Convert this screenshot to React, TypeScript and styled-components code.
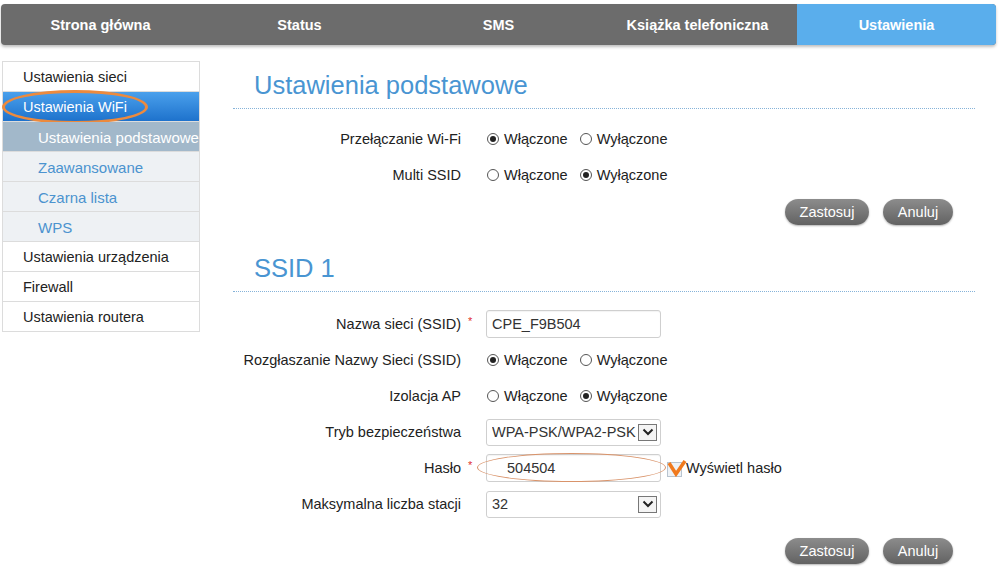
import styled, { createGlobalStyle } from 'styled-components'

const GlobalStyle = createGlobalStyle`
  body {
    margin: 0;
    background: #fff;
    font-family: "Liberation Sans", Arial, sans-serif;
    font-size: 14.5px;
    color: #222;
  }
`

const tabs = ['Strona główna', 'Status', 'SMS', 'Książka telefoniczna', 'Ustawienia']

const menu = [
  { label: 'Ustawienia sieci', level: 0 },
  { label: 'Ustawienia WiFi', level: 0, open: true },
  { label: 'Ustawienia podstawowe', level: 1, active: true },
  { label: 'Zaawansowane', level: 1 },
  { label: 'Czarna lista', level: 1 },
  { label: 'WPS', level: 1 },
  { label: 'Ustawienia urządzenia', level: 0 },
  { label: 'Firewall', level: 0 },
  { label: 'Ustawienia routera', level: 0 },
]

const Radio = ({ checked, label }: { checked: boolean; label: string }) => (
  <RadioItem>
    <RadioDot $checked={checked} />
    {label}
  </RadioItem>
)

const OnOff = ({ on }: { on: boolean }) => (
  <RadioGroup>
    <Radio checked={on} label="Włączone" />
    <Radio checked={!on} label="Wyłączone" />
  </RadioGroup>
)

const Arrow = () => (
  <ArrowBox>
    <svg width="12" height="8" viewBox="0 0 12 8">
      <path d="M1.5 1.5 L6 6 L10.5 1.5" fill="none" stroke="#222" strokeWidth="2" />
    </svg>
  </ArrowBox>
)

const Row = ({
  label,
  required,
  children,
}: {
  label: string
  required?: boolean
  children: React.ReactNode
}) => (
  <FormRow>
    <Label>{label}</Label>
    <Star>{required ? '*' : ''}</Star>
    <Control>{children}</Control>
  </FormRow>
)

const Buttons = ({ top }: { top: number }) => (
  <ButtonBar $top={top}>
    <Button $w={84}>Zastosuj</Button>
    <Button $w={70}>Anuluj</Button>
  </ButtonBar>
)

const App = () => {
  return (
    <Page>
      <GlobalStyle />
      <Nav>
        {tabs.map((t) => (
          <Tab key={t} $active={t === 'Ustawienia'}>
            {t}
          </Tab>
        ))}
      </Nav>
      <Body>
        <Sidebar>
          {menu.map((m) => (
            <MenuItem key={m.label} $level={m.level} $open={!!m.open} $active={!!m.active}>
              {m.label}
              {m.open && <SideMark />}
            </MenuItem>
          ))}
        </Sidebar>
        <Main>
          <Title>Ustawienia podstawowe</Title>
          <Rows $top={12}>
            <Row label="Przełączanie Wi-Fi">
              <OnOff on />
            </Row>
            <Row label="Multi SSID">
              <OnOff on={false} />
            </Row>
          </Rows>
          <Buttons top={6} />

          <Title $top={28}>SSID 1</Title>
          <Rows $top={14}>
            <Row label="Nazwa sieci (SSID)" required>
              <Input>CPE_F9B504</Input>
            </Row>
            <Row label="Rozgłaszanie Nazwy Sieci (SSID)">
              <OnOff on />
            </Row>
            <Row label="Izolacja AP">
              <OnOff on={false} />
            </Row>
            <Row label="Tryb bezpieczeństwa">
              <Select>
                <SelectText>WPA-PSK/WPA2-PSK</SelectText>
                <Arrow />
              </Select>
            </Row>
            <Row label="Hasło" required>
              <Input $indent={20}>
                504504
                <PassMark />
              </Input>
              <Check>
                <CheckBox>
                  <svg width="20" height="18" viewBox="0 0 20 18">
                    <path d="M2 4 L9 15 L18 2" fill="none" stroke="#f07a1e" strokeWidth="3.5" strokeLinejoin="miter" />
                  </svg>
                </CheckBox>
                Wyświetl hasło
              </Check>
            </Row>
            <Row label="Maksymalna liczba stacji">
              <Select>
                <SelectText>32</SelectText>
                <Arrow />
              </Select>
            </Row>
          </Rows>
          <Buttons top={16} />
        </Main>
      </Body>
    </Page>
  )
}

export default App

const Page = styled.div`
  width: 999px;
  height: 570px;
  overflow: hidden;
`

const Nav = styled.div`
  display: grid;
  grid-template-columns: repeat(5, 1fr);
  height: 41px;
  margin: 4px 3px 0 1px;
  background: #6c6c6c;
  border-radius: 4px;
  overflow: hidden;
  box-shadow: 0 2px 3px rgba(0, 0, 0, 0.25);
`

const Tab = styled.div<{ $active: boolean }>`
  display: flex;
  align-items: center;
  justify-content: center;
  color: #fff;
  font-weight: bold;
  font-size: 14.5px;
  background: ${({ $active }) => ($active ? '#5aaeec' : 'transparent')};
`

const Body = styled.div`
  display: flex;
  align-items: flex-start;
`

const Sidebar = styled.div`
  width: 196px;
  margin: 16px 0 0 2px;
  border: 1px solid #dcdcdc;
  border-bottom: none;
`

const MenuItem = styled.div<{ $level: number; $open: boolean; $active: boolean }>`
  position: relative;
  height: 29px;
  line-height: 31px;
  border-bottom: 1px solid #dcdcdc;
  padding-left: ${({ $level }) => ($level ? 35 : 20)}px;
  white-space: nowrap;
  font-size: ${({ $level }) => ($level ? 15 : 14.5)}px;
  color: ${({ $level, $open, $active }) =>
    $open || $active ? '#fff' : $level ? '#4b93cf' : '#222'};
  background: ${({ $level, $open, $active }) =>
    $open
      ? 'linear-gradient(#4aa0ec, #1e72cc)'
      : $active
        ? '#a2b8ca'
        : $level
          ? '#eef1f4'
          : '#fff'};
  ${({ $level }) => ($level ? 'overflow: hidden;' : '')}
`

const SideMark = styled.span`
  position: absolute;
  left: -1px;
  top: -2px;
  width: 146px;
  height: 34px;
  border: 3px solid #ec8a3e;
  border-radius: 50%;
  box-sizing: border-box;
`

const Main = styled.div`
  width: 742px;
  margin: 25px 0 0 33px;
`

const Title = styled.div<{ $top?: number }>`
  margin-top: ${({ $top }) => $top ?? 0}px;
  padding: 0 0 8px 21px;
  height: 30px;
  line-height: 30px;
  font-size: 25.5px;
  color: #4995d2;
  border-bottom: 1px dotted #86b3d9;
`

const Rows = styled.div<{ $top: number }>`
  margin-top: ${({ $top }) => $top}px;
  display: flex;
  flex-direction: column;
`

const FormRow = styled.div`
  display: flex;
  align-items: center;
  height: 36px;
`

const Label = styled.div`
  width: 228px;
  text-align: right;
  color: #222;
`

const Star = styled.div`
  width: 25px;
  padding-left: 7px;
  box-sizing: border-box;
  color: #e03030;
  font-size: 11px;
  align-self: flex-start;
  margin-top: 9px;
`

const Control = styled.div`
  display: flex;
  align-items: center;
`

const RadioGroup = styled.div`
  display: flex;
  gap: 11px;
`

const RadioItem = styled.div`
  display: flex;
  align-items: center;
  gap: 5px;
  color: #222;
`

const RadioDot = styled.span<{ $checked: boolean }>`
  width: 12px;
  height: 12px;
  box-sizing: border-box;
  border: 1px solid #555;
  border-radius: 50%;
  display: flex;
  align-items: center;
  justify-content: center;
  margin-left: 1px;
  &::after {
    content: '';
    width: 6px;
    height: 6px;
    border-radius: 50%;
    background: ${({ $checked }) => ($checked ? '#222' : 'transparent')};
  }
`

const Input = styled.div<{ $indent?: number }>`
  position: relative;
  width: 175px;
  height: 28px;
  box-sizing: border-box;
  border: 1px solid #cfcfcf;
  border-radius: 3px;
  padding-left: ${({ $indent }) => $indent ?? 5}px;
  line-height: 26px;
  color: #333;
  box-shadow: inset 0 1px 1px rgba(0, 0, 0, 0.05);
`

const PassMark = styled.span`
  position: absolute;
  left: -10px;
  top: -2px;
  width: 189px;
  height: 29px;
  border: 1px solid #d9936a;
  border-radius: 50%;
  box-sizing: border-box;
`

const Select = styled.div`
  display: flex;
  align-items: center;
  width: 175px;
  height: 27px;
  box-sizing: border-box;
  border: 1px solid #cfcfcf;
  border-radius: 3px;
  padding: 0 3px 0 5px;
  color: #333;
`

const SelectText = styled.span`
  flex: 1;
  white-space: nowrap;
  overflow: hidden;
`

const ArrowBox = styled.span`
  width: 19px;
  height: 17px;
  box-sizing: border-box;
  border: 1px solid #777;
  background: #f4f4f4;
  display: flex;
  align-items: center;
  justify-content: center;
`

const Check = styled.div`
  display: flex;
  align-items: center;
  gap: 4px;
  margin-left: 6px;
  color: #222;
`

const CheckBox = styled.span`
  position: relative;
  width: 15px;
  height: 15px;
  border: 1px solid #b8c4d0;
  background: #eef2f6;
  box-sizing: border-box;
  margin-top: 2px;
  svg {
    position: absolute;
    left: -1px;
    top: -4px;
  }
`

const ButtonBar = styled.div<{ $top: number }>`
  display: flex;
  justify-content: flex-end;
  gap: 14px;
  margin: ${({ $top }) => $top}px 22px 0 0;
`

const Button = styled.div<{ $w: number }>`
  width: ${({ $w }) => $w}px;
  height: 26px;
  line-height: 26px;
  text-align: center;
  border-radius: 13px;
  color: #fff;
  background: linear-gradient(#8c8c8c, #626262);
  box-shadow: 0 1px 2px rgba(0, 0, 0, 0.3);
`
